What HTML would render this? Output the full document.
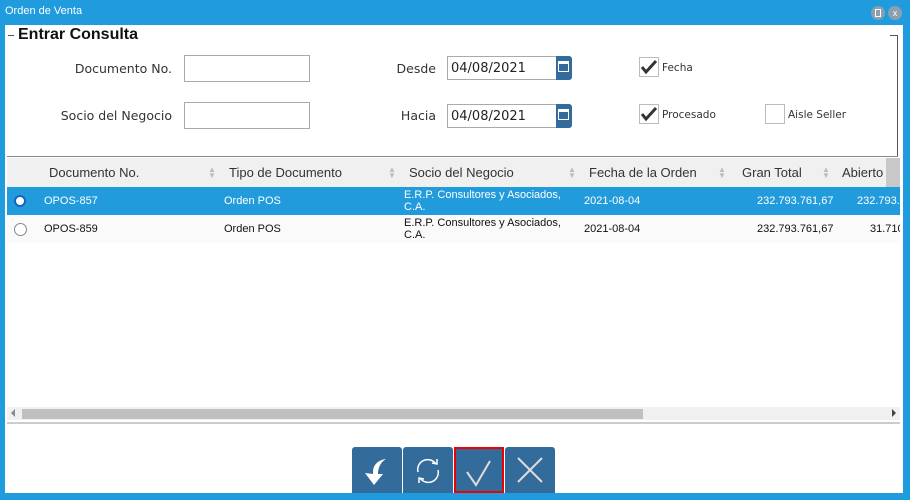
<!DOCTYPE html>
<html><head><style>
*{margin:0;padding:0;box-sizing:border-box}
body{width:910px;height:500px;background:#209bdd;font-family:"Liberation Sans",sans-serif;position:relative;overflow:hidden}
.a{position:absolute}
.lbl{font-family:"DejaVu Sans",sans-serif;font-size:12.5px;color:#333;text-align:right}
.inp{border:1px solid #aaa;background:#fff;font-family:"DejaVu Sans",sans-serif;font-size:13px;color:#222;padding:5px 0 0 3px}
.cb{border:1px solid #bbb;background:#fff;width:20px;height:20px}
.small{font-family:"DejaVu Sans",sans-serif;font-size:10.5px;color:#333}
.th{font-size:13px;color:#333;top:165px}
.td{font-size:11px;}
.btn{top:447px;width:50px;height:46px;background:#336b9a;border-radius:3px 3px 0 0}
</style></head><body>
<div class="a" style="left:5px;top:5px;color:#fff;font-size:11px">Orden de Venta</div>
<div class="a" style="left:871px;top:6px;width:14px;height:14px;border-radius:7px;background:#8aa0b0"></div>
<div class="a" style="left:875px;top:9px;width:6px;height:8px;border:1px solid #fff"></div>
<div class="a" style="left:888px;top:6px;width:14px;height:14px;border-radius:7px;background:#8aa0b0;color:#fff;font-size:9px;text-align:center;line-height:14px">x</div>
<div class="a" style="left:5px;top:25px;width:898px;height:468px;background:#fff"></div>
<div class="a" style="left:8px;top:35px;width:6px;height:1px;background:#555"></div>
<div class="a" style="left:18px;top:26px;font-size:16px;font-weight:bold;color:#111">Entrar Consulta</div>
<div class="a" style="left:890px;top:35px;width:8px;height:122px;border-top:1px solid #555;border-right:1px solid #555"></div>
<div class="a" style="left:7px;top:156px;width:891px;height:1px;background:#888"></div>
<div class="a lbl" style="left:0;width:172px;top:61px">Documento No.</div>
<div class="a inp" style="left:184px;top:55px;width:126px;height:27px"></div>
<div class="a lbl" style="left:0;width:172px;top:108px">Socio del Negocio</div>
<div class="a inp" style="left:184px;top:102px;width:126px;height:27px"></div>
<div class="a lbl" style="left:300px;width:136px;top:61px">Desde</div>
<div class="a inp" style="left:447px;top:56px;width:110px;height:24px;padding-top:4px">04/08/2021</div>
<div class="a" style="left:556px;top:56px;width:16px;height:24px;background:#336b9a;border-radius:0 3px 3px 0"><div style="margin:5px 0 0 2px;width:11px;height:11px;border:1px solid #fff;border-top-width:3px"></div></div>
<div class="a lbl" style="left:300px;width:136px;top:108px">Hacia</div>
<div class="a inp" style="left:447px;top:104px;width:110px;height:24px;padding-top:4px">04/08/2021</div>
<div class="a" style="left:556px;top:104px;width:16px;height:24px;background:#336b9a;border-radius:0 3px 3px 0"><div style="margin:5px 0 0 2px;width:11px;height:11px;border:1px solid #fff;border-top-width:3px"></div></div>
<div class="a cb" style="left:639px;top:57px"><svg width="18" height="18"><path d="M2 9l4 5 10-11" stroke="#333" stroke-width="3" fill="none"/></svg></div>
<div class="a small" style="left:662px;top:62px">Fecha</div>
<div class="a cb" style="left:639px;top:104px"><svg width="18" height="18"><path d="M2 9l4 5 10-11" stroke="#333" stroke-width="3" fill="none"/></svg></div>
<div class="a small" style="left:662px;top:109px">Procesado</div>
<div class="a cb" style="left:765px;top:104px"></div>
<div class="a small" style="left:788px;top:109px">Aisle Seller</div>
<div class="a" style="left:7px;top:158px;width:893px;height:29px;background:#f0f0f0"></div>
<div class="a" style="left:886px;top:158px;width:14px;height:29px;background:#c8c8c8"></div>
<div class="a th" style="left:49px">Documento No.</div>
<div class="a th" style="left:229px">Tipo de Documento</div>
<div class="a th" style="left:409px">Socio del Negocio</div>
<div class="a th" style="left:589px">Fecha de la Orden</div>
<div class="a th" style="left:742px">Gran Total</div>
<div class="a th" style="left:842px">Abierto</div>
<div class="a" style="left:208px;top:167px;color:#bbb;font-size:8px;line-height:6px">▲<br>▼</div>
<div class="a" style="left:388px;top:167px;color:#bbb;font-size:8px;line-height:6px">▲<br>▼</div>
<div class="a" style="left:568px;top:167px;color:#bbb;font-size:8px;line-height:6px">▲<br>▼</div>
<div class="a" style="left:718px;top:167px;color:#bbb;font-size:8px;line-height:6px">▲<br>▼</div>
<div class="a" style="left:822px;top:167px;color:#bbb;font-size:8px;line-height:6px">▲<br>▼</div>
<div class="a" style="left:7px;top:187px;width:893px;height:28px;background:#219bdc;color:#fff;overflow:hidden">
<div class="a" style="left:7px;top:8px;width:12px;height:12px;border-radius:6px;background:#fff;border:2px solid #1565c0"></div>
<div class="a td" style="left:37px;top:8px">OPOS-857</div>
<div class="a td" style="left:217px;top:8px">Orden POS</div>
<div class="a td" style="left:397px;top:2px;line-height:12px">E.R.P. Consultores y Asociados,<br>C.A.</div>
<div class="a td" style="left:577px;top:8px">2021-08-04</div>
<div class="a td" style="left:750px;top:8px">232.793.761,67</div>
<div class="a td" style="left:850px;top:8px">232.793.761</div>
</div>
<div class="a" style="left:7px;top:215px;width:893px;height:28px;background:#fafafa;color:#111;overflow:hidden">
<div class="a" style="left:7px;top:8px;width:13px;height:13px;border-radius:7px;background:#fff;border:1px solid #888"></div>
<div class="a td" style="left:37px;top:8px">OPOS-859</div>
<div class="a td" style="left:217px;top:8px">Orden POS</div>
<div class="a td" style="left:397px;top:2px;line-height:12px">E.R.P. Consultores y Asociados,<br>C.A.</div>
<div class="a td" style="left:577px;top:8px">2021-08-04</div>
<div class="a td" style="left:750px;top:8px">232.793.761,67</div>
<div class="a td" style="left:863px;top:8px">31.710.4</div>
</div>
<div class="a" style="left:7px;top:407px;width:893px;height:13px;background:#f0f0f0"></div>
<div class="a" style="left:22px;top:409px;width:621px;height:10px;background:#c0c0c0"></div>
<div class="a" style="left:11px;top:409px;width:0;height:0;border:4px solid transparent;border-right-color:#888;border-left:0"></div>
<div class="a" style="left:892px;top:409px;width:0;height:0;border:4px solid transparent;border-left-color:#444;border-right:0"></div>
<div class="a" style="left:7px;top:422px;width:893px;height:2px;background:#ccc"></div>
<div class="a btn" style="left:352px"><svg width="50" height="46"><path d="M34 12 C26 13 21 18 21 25 L21 27 L13 26 L22 38 L31 27 L26 27 C26 20 29 15 34 12Z" fill="#fff"/></svg></div>
<div class="a btn" style="left:403px"><svg width="50" height="46"><path d="M15 25 A10 10 0 0 1 33 17 M35 23 A10 10 0 0 1 17 31" stroke="#fff" stroke-width="1.5" fill="none"/><path d="M29 16l5 1 0-5M21 32l-5-1 0 5" stroke="#fff" stroke-width="1.5" fill="none"/></svg></div>
<div class="a btn" style="left:454px;border:2px solid #e00;border-radius:0"><svg width="46" height="42"><path d="M11 23l9 13 14-24" stroke="#ddd" stroke-width="2" fill="none"/></svg></div>
<div class="a btn" style="left:505px"><svg width="50" height="46"><path d="M13 11l24 24M37 11l-24 24" stroke="#ddd" stroke-width="2"/></svg></div>
</body></html>
